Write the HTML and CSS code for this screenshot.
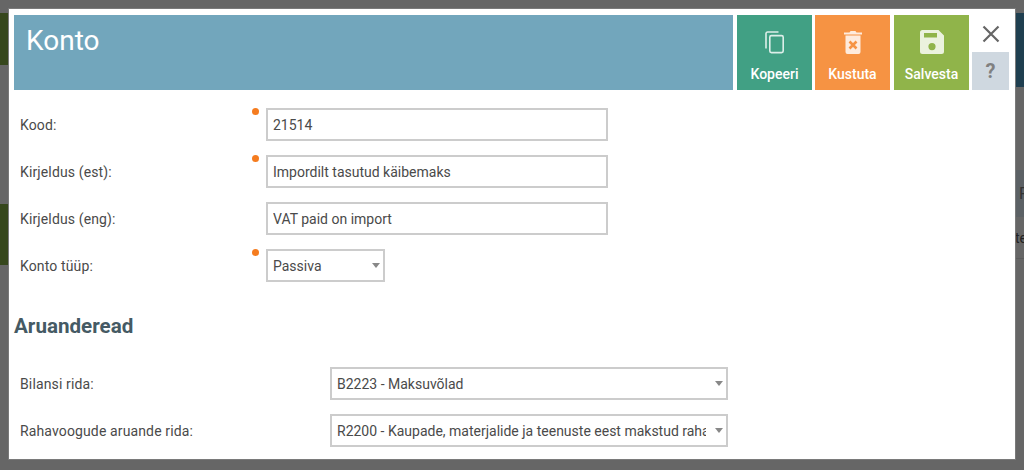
FILE: index.html
```html
<!DOCTYPE html>
<html lang="en">
<head>
    <meta charset="UTF-8">
    <title>Konto</title>
    <link rel="stylesheet" href="styles.css">
</head>
<body>
    <div class="backdrop">
        <div class="bg-bar bg-green-top"></div>
        <div class="bg-bar bg-green-mid"></div>
        <div class="bg-bar bg-blue"></div>
        <div class="bg-bar bg-head">F</div>
        <div class="bg-bar bg-cell">te</div>
    </div>

    <div class="modal">
        <div class="modal-header">
            <div class="title-bar">
                <h1 class="title">Konto</h1>
            </div>
            <button class="action action-copy">
                <svg class="action-icon" width="24" height="24" viewBox="0 0 24 24" fill="none" stroke="currentColor" stroke-width="1.6">
                    <path d="M3 18.500V3.600A1.600 1.600 0 0 1 4.600 2H15.500"/>
                    <rect x="6.800" y="5.600" width="13.400" height="17" rx="1.600"/>
                </svg>
                <span>Kopeeri</span>
            </button>
            <button class="action action-delete">
                <svg class="action-icon" width="24" height="24" viewBox="0 0 24 24">
                    <path fill="currentColor" d="M3 2.400h5.500L9.600 1h4.800l1.100 1.400H21v2H3zM4.500 5.500h15V22a2 2 0 0 1-2 2h-11a2 2 0 0 1-2-2z"/>
                    <path class="trash-x" d="M8.500 11.500l7 7M15.500 11.500l-7 7"/>
                </svg>
                <span>Kustuta</span>
            </button>
            <button class="action action-save">
                <svg class="action-icon" width="24" height="24" viewBox="0 0 24 24">
                    <path fill="currentColor" fill-rule="evenodd" d="M2.500 0h16L24 5.500V21.500a2.500 2.500 0 0 1-2.500 2.500h-19A2.500 2.500 0 0 1 0 21.500V2.500A2.500 2.500 0 0 1 2.500 0zM4 3v4.500h13V3zM12 13a3.600 3.600 0 1 0 0 7.200 3.600 3.600 0 0 0 0-7.200z"/>
                </svg>
                <span>Salvesta</span>
            </button>
            <div class="side-actions">
                <button class="close-btn">
                    <svg width="18" height="18" viewBox="0 0 18 18" fill="none" stroke="currentColor" stroke-width="2.200">
                        <path d="M1.500 1.500l15 15M16.500 1.500l-15 15"/>
                    </svg>
                </button>
                <button class="help-btn">?</button>
            </div>
        </div>

        <div class="form-section">
            <div class="form-row">
                <label class="form-label">Kood:</label>
                <div class="field required"><input class="text-input" value="21514"></div>
            </div>
            <div class="form-row">
                <label class="form-label">Kirjeldus (est):</label>
                <div class="field required"><input class="text-input" value="Impordilt tasutud käibemaks"></div>
            </div>
            <div class="form-row">
                <label class="form-label">Kirjeldus (eng):</label>
                <div class="field"><input class="text-input" value="VAT paid on import"></div>
            </div>
            <div class="form-row">
                <label class="form-label">Konto tüüp:</label>
                <div class="field required select-wrap select-short">
                    <select class="select-input"><option>Passiva</option></select>
                </div>
            </div>
        </div>

        <h2 class="section-title">Aruanderead</h2>

        <div class="form-section report-section">
            <div class="form-row">
                <label class="form-label">Bilansi rida:</label>
                <div class="field select-wrap">
                    <select class="select-input"><option>B2223 - Maksuvõlad</option></select>
                </div>
            </div>
            <div class="form-row">
                <label class="form-label">Rahavoogude aruande rida:</label>
                <div class="field select-wrap">
                    <select class="select-input"><option>R2200 - Kaupade, materjalide ja teenuste eest makstud raha</option></select>
                </div>
            </div>
        </div>
    </div>
</body>
</html>
```

FILE: styles.css
```css
* {
    margin: 0;
    padding: 0;
    box-sizing: border-box;
}

body {
    font-family: Roboto, "Liberation Sans", sans-serif;
    background: #666666;
    overflow: hidden;
    height: 470px;
    padding: 9px;
    position: relative;
}

/* page behind the dialog, only the edges show */
.backdrop {
    position: absolute;
    top: 0;
    left: 0;
    width: 1024px;
    height: 470px;
}

.bg-bar {
    position: absolute;
}

.bg-green-top {
    left: 0;
    top: 13px;
    width: 9px;
    height: 52px;
    background: #36471c;
}

.bg-green-mid {
    left: 0;
    top: 204px;
    width: 9px;
    height: 61px;
    background: #36471c;
}

.bg-blue {
    right: 0;
    top: 13px;
    width: 9px;
    height: 74px;
    background: #1f3f50;
}

.bg-head {
    right: 0;
    top: 170px;
    width: 9px;
    height: 47px;
    background: #5c6165;
    color: #333333;
    font-size: 16px;
    line-height: 47px;
    padding-left: 4px;
    overflow: hidden;
}

.bg-cell {
    right: 0;
    top: 217px;
    width: 9px;
    height: 42px;
    border-bottom: 1px solid #5c5c5c;
    color: #222222;
    font-size: 14px;
    line-height: 42px;
    overflow: hidden;
}

.modal {
    position: relative;
    width: 1006px;
    height: 450px;
    background: #ffffff;
    overflow: hidden;
    box-shadow: 0 0 0 1px #7a7a7a;
}

.modal-header {
    display: flex;
    height: 75px;
    margin: 6px 6px 0 5px;
    gap: 4px;
}

.title-bar {
    flex: 1;
    background: #72a6bc;
    padding: 12px;
}

.title {
    font-size: 28px;
    font-weight: 400;
    line-height: 28px;
    color: #ffffff;
}

.action {
    width: 75px;
    border: none;
    color: #ffffff;
    font-family: inherit;
    font-size: 14px;
    font-weight: 500;
    display: flex;
    flex-direction: column;
    align-items: center;
    padding-top: 15px;
    gap: 12px;
}

.action-icon {
    display: block;
    color: rgba(255, 255, 255, 0.82);
}

.action-copy {
    background: #41a084;
}

.action-delete {
    background: #f69343;
    margin-left: -1px;
}

.trash-x {
    fill: none;
    stroke: #f69343;
    stroke-width: 2.600;
}

.action-save {
    background: #90b44a;
}

.side-actions {
    width: 37px;
    margin-left: -1px;
    display: flex;
    flex-direction: column;
}

.close-btn {
    height: 37px;
    border: none;
    background: none;
    color: #666666;
    display: flex;
    align-items: center;
    justify-content: center;
}

.help-btn {
    height: 38px;
    border: none;
    background: #cfd8e0;
    color: #808080;
    font-family: inherit;
    font-size: 20px;
    font-weight: 700;
}

.form-section {
    padding: 18px 0 0 11px;
    display: flex;
    flex-direction: column;
    gap: 14px;
}

.form-row {
    display: flex;
    align-items: center;
    height: 33px;
}

.form-label {
    width: 246px;
    font-size: 14px;
    letter-spacing: 0.13px;
    color: #4a4a4a;
}

.report-section .form-label {
    width: 310px;
}

.field {
    position: relative;
    width: 342px;
    height: 33px;
}

.required::before {
    content: '';
    position: absolute;
    left: -14px;
    top: 0;
    width: 7px;
    height: 7px;
    border-radius: 50%;
    background: #f57c1f;
}

.text-input,
.select-input {
    width: 100%;
    height: 100%;
    border: 2px solid #cccccc;
    background: #ffffff;
    font-family: inherit;
    font-size: 14px;
    color: #4a4a4a;
    padding: 0 5px;
    outline: none;
}

.select-input {
    appearance: none;
    -webkit-appearance: none;
    padding-right: 20px;
    border-radius: 0;
}

.select-wrap {
    width: 398px;
}

.select-short {
    width: 119px;
}

.select-wrap::after {
    content: '';
    position: absolute;
    right: 5px;
    top: 14px;
    border-left: 4.500px solid transparent;
    border-right: 4.500px solid transparent;
    border-top: 5px solid #888888;
    pointer-events: none;
}

.section-title {
    font-size: 20.600px;
    font-weight: 700;
    line-height: 24px;
    color: #455a64;
    margin: 32px 0 0 5px;
}

.report-section {
    padding-top: 29px;
}
```
